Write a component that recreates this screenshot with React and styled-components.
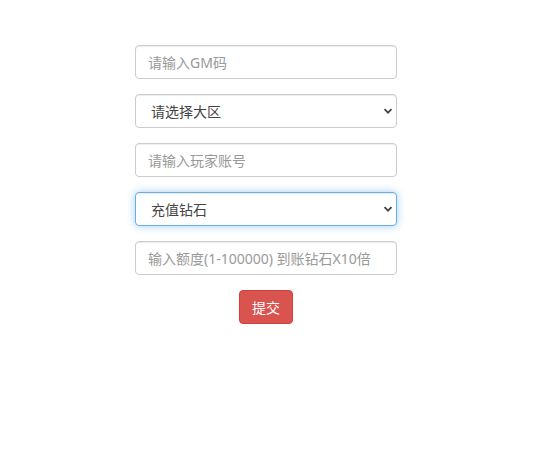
import styled, { createGlobalStyle } from 'styled-components';

const GlobalStyle = createGlobalStyle`
  html, body {
    margin: 0;
    padding: 0;
    background: #fff;
  }

  body {
    font-family: "Noto Sans", "Noto Sans CJK SC", sans-serif;
    font-size: 14px;
    color: #333;
  }
`;

const Page = styled.div`
  display: flex;
  padding: 45px 0 0 135px;
`;

const Form = styled.form`
  display: flex;
  flex-direction: column;
  gap: 15px;
  width: 262px;
`;

const Field = styled.input`
  box-sizing: border-box;
  display: block;
  width: 100%;
  height: 34px;
  padding: 6px 12px;
  font-family: inherit;
  font-size: 14px;
  color: #555;
  background: #fff;
  border: 1px solid #ccc;
  border-radius: 4px;
  box-shadow: inset 0 1px 1px rgba(0, 0, 0, 0.075);
  outline: none;

  &::placeholder {
    color: #999;
  }
`;

const SelectWrap = styled.div`
  position: relative;
`;

const Select = styled.select`
  box-sizing: border-box;
  display: block;
  width: 100%;
  height: 34px;
  padding: 6px 12px 6px 15px;
  font-family: inherit;
  font-size: 14px;
  color: #444;
  background: #fff;
  appearance: none;
  border: 1px solid ${(p) => (p.$focused ? '#66afe9' : '#ccc')};
  border-radius: 4px;
  box-shadow: ${(p) =>
    p.$focused
      ? 'inset 0 1px 1px rgba(0,0,0,.075), 0 0 8px rgba(102,175,233,.6)'
      : 'inset 0 1px 1px rgba(0,0,0,.075)'};
  outline: none;
`;

const Chevron = styled.svg`
  position: absolute;
  right: 4px;
  top: 12px;
  width: 10px;
  height: 10px;
  pointer-events: none;
`;

const Actions = styled.div`
  display: flex;
  justify-content: center;
`;

const Button = styled.button`
  box-sizing: border-box;
  height: 34px;
  padding: 6px 12px;
  font-family: inherit;
  font-size: 14px;
  color: #fff;
  background: #d9534f;
  border: 1px solid #d43f3a;
  border-radius: 4px;
  cursor: pointer;
`;

function Dropdown({ value, focused }) {
  return (
    <SelectWrap>
      <Select $focused={focused} defaultValue={value}>
        <option value={value}>{value}</option>
      </Select>
      <Chevron viewBox="0 0 10 10">
        <path d="M1.5 3.2 L5 6.7 L8.5 3.2" fill="none" stroke="#444" strokeWidth="1.8" />
      </Chevron>
    </SelectWrap>
  );
}

export default function App() {
  return (
    <Page>
      <GlobalStyle />
      <Form onSubmit={(e) => e.preventDefault()}>
        <Field placeholder="请输入GM码" />
        <Dropdown value="请选择大区" />
        <Field placeholder="请输入玩家账号" />
        <Dropdown value="充值钻石" focused />
        <Field placeholder="输入额度(1-100000) 到账钻石X10倍" />
        <Actions>
          <Button type="submit">提交</Button>
        </Actions>
      </Form>
    </Page>
  );
}
